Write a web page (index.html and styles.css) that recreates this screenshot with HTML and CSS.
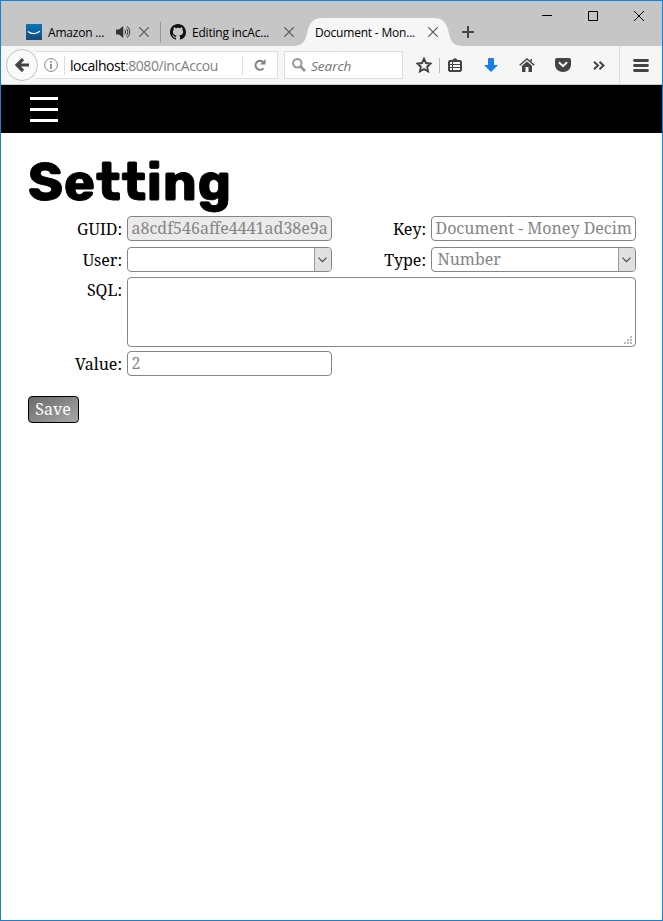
FILE: index.html
```html
<!DOCTYPE html>
<html lang="en">
<head>
<meta charset="utf-8">
<title>Document - Money Decimals</title>
<link rel="stylesheet" href="styles.css">
</head>
<body>
<div class="window">
  <div class="tabstrip">
    <div class="tab tab-amazon">
      <svg class="favicon" width="16" height="16" viewBox="0 0 16 16"><defs><linearGradient id="az" x2="0" y2="1"><stop stop-color="#0876b8"/><stop offset="1" stop-color="#164a78"/></linearGradient></defs><path fill="url(#az)" d="M0 0h16v16H0z"/><path d="M2 7.500c3.500 2.700 8 2.700 12-.2" fill="none" stroke="#fff" stroke-width="1.300"/></svg>
      <span class="tab-title t1">Amazon ...</span>
      <svg class="audio" width="15" height="14" viewBox="0 0 15 14"><path fill="#333" d="M0 4.500h3L7.300 1v12L3 9.500H0z"/><path d="M8.800 5c1 1.200 1 2.800 0 4M10.300 3.300c2 2.200 2 5.200 0 7.400M11 1.300c3.600 2.500 3.600 8.900 0 11.400" fill="none" stroke="#333"/></svg>
      <svg class="close" width="10" height="10" viewBox="0 0 10 10"><path d="M.3.3l9.400 9.400M9.700.3L.3 9.700"/></svg>
    </div>
    <div class="tab tab-github">
      <svg class="favicon" width="16" height="16" viewBox="0 0 16 16"><path fill="#111" d="M8 0C3.580 0 0 3.580 0 8c0 3.540 2.290 6.530 5.470 7.590.4.070.55-.17.55-.38 0-.19-.01-.82-.01-1.490-2.010.37-2.530-.49-2.690-.94-.09-.23-.48-.94-.82-1.130-.28-.15-.68-.52-.01-.53.63-.01 1.080.58 1.230.82.72 1.210 1.870.87 2.330.66.07-.52.28-.87.51-1.070-1.780-.2-3.640-.89-3.640-3.950 0-.87.31-1.590.82-2.150-.08-.2-.36-1.020.08-2.120 0 0 .67-.21 2.200.82.64-.18 1.320-.27 2-.27s1.360.09 2 .27c1.530-1.040 2.200-.82 2.200-.82.44 1.100.16 1.920.08 2.120.51.56.82 1.270.82 2.150 0 3.070-1.870 3.750-3.650 3.950.29.25.54.73.54 1.480 0 1.070-.01 1.930-.01 2.200 0 .21.15.46.55.38A8 8 0 0 0 16 8c0-4.420-3.580-8-8-8z"/></svg>
      <span class="tab-title t2">Editing incAc...</span>
      <svg class="close" width="10" height="10" viewBox="0 0 10 10"><path d="M.3.3l9.400 9.400M9.700.3L.3 9.700"/></svg>
    </div>
    <div class="tab tab-active">
      <svg class="tab-shape" width="166" height="28" viewBox="0 0 166 28"><path fill="#f6f6f6" d="M-5 28C9 28 8 17 10.500 10 13 3 17 0 24 0H136C143 0 147 3 149.500 10 152 17 151 28 165 28z"/></svg>
      <span class="tab-title t3">Document - Mon...</span>
      <svg class="close" width="10" height="10" viewBox="0 0 10 10"><path d="M.3.3l9.400 9.400M9.700.3L.3 9.700"/></svg>
    </div>
    <svg class="newtab" width="12" height="12" viewBox="0 0 12 12"><path d="M6 0v12M0 6h12" stroke="#444" stroke-width="2"/></svg>
    <div class="controls">
      <svg width="10" height="10" viewBox="0 0 10 10"><path d="M0 4.500h10"/></svg>
      <svg width="10" height="10" viewBox="0 0 10 10"><path d="M.5.5h9v9h-9z"/></svg>
      <svg width="10" height="10" viewBox="0 0 10 10"><path d="M0 0l10 10M10 0L0 10"/></svg>
    </div>
  </div>
  <div class="toolbar">
    <div class="back"><svg width="14" height="14" viewBox="0 0 14 14"><path d="M8 1L2 7l6 6M2.500 7H14" fill="none" stroke="#444" stroke-width="3.200"/></svg></div>
    <div class="urlbar">
      <svg class="info" width="14" height="14" viewBox="0 0 14 14"><circle cx="7" cy="7" r="6.400" fill="none" stroke="#858585"/><path d="M6.200 3h1.700v1.700H6.200zM6.200 6h1.700v5H6.200z" fill="#858585"/></svg>
      <span class="url"><b>localhost</b>:8080/incAccou</span>
      <div class="reload"><svg width="12" height="12" viewBox="0 0 12 12"><path d="M9.500 9.300A4.500 4.500 0 1 1 9 2.900" fill="none" stroke="#808080" stroke-width="2"/><path fill="#808080" d="M11.500 0v5.600H6z"/></svg></div>
    </div>
    <div class="search">
      <svg width="14" height="14" viewBox="0 0 14 14"><circle cx="5.300" cy="5.300" r="4.200" fill="none" stroke="#959595" stroke-width="2"/><path d="M8.500 8.500L13 13" stroke="#959595" stroke-width="2.600"/></svg>
      <span>Search</span>
    </div>
    <div class="tools">
      <div class="tool star"><svg width="16" height="16" viewBox="0 0 16 16"><path d="M8 1.700l1.900 4.300 4.700.5-3.500 3.200 1 4.700L8 12l-4.100 2.400 1-4.700L1.400 6.500 6.100 6z" fill="none" stroke="#444" stroke-width="1.900"/></svg></div>
      <div class="tool list"><svg width="14" height="14" viewBox="0 0 14 14"><path fill="#444" d="M1.500 2H4l3-2 3 2h2.500L14 3.500v9L12.500 14h-11L0 12.500v-9z"/><path fill="#f6f6f6" d="M2 4h2v2H2zm3 0h7v2H5zM2 7h2v2H2zm3 0h7v2H5zm-3 3h2v2H2zm3 0h7v2H5z"/></svg></div>
      <div class="tool"><svg width="14" height="14" viewBox="0 0 14 14"><path fill="#177ee8" d="M4 1q0-1 1-1h4q1 0 1 1v6h4l-7 7-7-7h4z"/></svg></div>
      <div class="tool"><svg width="16" height="14" viewBox="0 0 16 14"><path d="M.7 7.300L8 1l7.300 6.300" fill="none" stroke="#444" stroke-width="1.400"/><path fill="#444" d="M11.500 1H13v3l-1.500-1.300zM3 7.800l5-4.300 5 4.300V14H9.500V9h-3v5H3z"/></svg></div>
      <div class="tool"><svg width="16" height="14" viewBox="0 0 16 14"><path fill="#444" d="M2 0h12q2 0 2 2v4.500C16 11 12.500 14 8 14S0 11 0 6.500V2q0-2 2-2z"/><path d="M4.500 4.700L8 8.200l3.500-3.500" fill="none" stroke="#f6f6f6" stroke-width="2" stroke-linecap="round"/></svg></div>
      <div class="tool"><svg width="12" height="9" viewBox="0 0 12 9"><path d="M1 .7l4 3.800-4 3.800M6.500.7l4 3.800-4 3.800" fill="none" stroke="#444" stroke-width="2"/></svg></div>
      <div class="menu"><svg width="16" height="13" viewBox="0 0 16 13"><path d="M1.500 1.500h13M1.500 6.500h13M1.500 11.500h13" stroke="#444" stroke-width="2.800" stroke-linecap="round"/></svg></div>
    </div>
  </div>
  <header class="appbar"><div class="burger"><i></i><i></i><i></i></div></header>
  <main>
    <h1>Setting</h1>
    <form>
      <label>GUID:</label><div class="field readonly"><span>a8cdf546affe4441ad38e9a</span></div>
      <label>Key:</label><div class="field"><span>Document - Money Decim</span></div>
      <label>User:</label><div class="field select"><span></span><div class="arrow"><svg width="9" height="6" viewBox="0 0 9 6"><path d="M.5.7l4 4 4-4" fill="none" stroke="#444" stroke-width="1.100"/></svg></div></div>
      <label>Type:</label><div class="field select"><span>Number</span><div class="arrow"><svg width="9" height="6" viewBox="0 0 9 6"><path d="M.5.7l4 4 4-4" fill="none" stroke="#444" stroke-width="1.100"/></svg></div></div>
      <label>SQL:</label><div class="field area"><svg width="8" height="8" viewBox="0 0 8 8"><path fill="#b8b8b8" d="M6 0h2v2H6zM3 3h2v2H3zm3 0h2v2H6zM0 6h2v2H0zm3 0h2v2H3zm3 0h2v2H6z"/></svg></div>
      <label>Value:</label><div class="field"><span>2</span></div>
    </form>
    <button type="button">Save</button>
  </main>
</div>
</body>
</html>
```

FILE: styles.css
```css
* { box-sizing: border-box; }
body { margin: 0; background: #fff; }
svg { display: block; flex: none; }
.window { height: 921px; border: 1px solid #1a80d4; overflow: hidden; background: #fff; }

.tabstrip { position: relative; display: flex; height: 45px; padding-top: 17px; background: #c6c6c6; font: 12px "Open Sans", "Noto Sans", sans-serif; color: #000; }
.tab { position: relative; display: flex; align-items: center; height: 28px; }
.tab-title { white-space: nowrap; margin-left: 6px; letter-spacing: -0.2px; }
.close { margin-left: auto; fill: none; stroke: #555; stroke-width: 1.2; }
.tab-amazon { width: 134px; margin-left: 25px; padding-right: 11px; }
.tab-amazon::after { content: ""; position: absolute; right: -1px; top: 4px; width: 1px; height: 21px; background: #999; }
.t1 { width: 68px; }
.tab-github { width: 134px; padding-left: 10px; }
.tab-active { width: 166px; margin-left: 4px; padding: 0 26px 0 11px; }
.tab-active > :not(.tab-shape) { position: relative; }
.tab-shape { position: absolute; left: 0; top: 0; overflow: visible; }
.newtab { margin: 8px 0 0 -2px; }
.controls { position: absolute; right: 18px; top: 10px; display: flex; gap: 36px; fill: none; stroke: #000; }

.toolbar { display: flex; align-items: center; height: 39px; background: #f6f6f6; border-bottom: 1px solid #ccc; font-family: "Open Sans", "Noto Sans", sans-serif; }
.back { display: flex; align-items: center; justify-content: center; width: 32px; height: 32px; margin-left: 5px; border: 1px solid #c4c4c4; border-radius: 50%; background: #fafafa; position: relative; }
.urlbar { display: flex; align-items: center; width: 242px; height: 28px; margin-left: -2px; padding-left: 8px; border: 1px solid #ddd; border-left: 0; background: #fff; }
.info { margin-right: 6px; }
.url { display: block; height: 19px; padding-left: 5px; border-left: 1px solid #ddd; font-size: 14px; line-height: 20px; color: #808080; white-space: nowrap; letter-spacing: -0.42px; }
.url b { font-weight: 400; color: #000; }
.reload { display: flex; align-items: center; justify-content: center; width: 35px; height: 19px; margin-left: auto; border-left: 1px solid #ddd; }
.search { display: flex; align-items: center; gap: 5px; width: 119px; height: 28px; margin-left: 6px; padding-left: 7px; border: 1px solid #ddd; background: #fff; font-size: 13.5px; font-style: italic; color: #737373; }
.search span { padding-top: 1px; }
.tools { display: flex; align-items: center; flex: 1; height: 38px; padding-left: 5px; }
.tool { display: flex; flex: none; align-items: center; justify-content: center; width: 36px; height: 15px; }
.star { width: 32px; border-right: 1px solid #bbb; }
.list { width: 33px; padding-right: 3px; }
.menu { display: flex; align-items: center; height: 38px; margin-left: 2px; padding-left: 13px; border-left: 1px solid #ddd; }

.appbar { height: 48px; padding: 12px 0 0 29px; background: #000; }
.burger { display: flex; flex-direction: column; gap: 8px; width: 28px; }
.burger i { height: 3px; background: #fff; }

main { padding: 20px 26px 0 27px; font: 16px/25px "Noto Serif", "Droid Serif", "DejaVu Serif", serif; }
h1 { height: 63px; margin: 0; font: 700 53px/58px Rubik, Inter, sans-serif; letter-spacing: 0.7px; -webkit-text-stroke: 0.9px #000; }
form { display: grid; grid-template-columns: 94px 205px 89px 205px; grid-template-rows: 31px 30px 74px 25px; column-gap: 5px; }
label { line-height: 26px; text-align: right; color: #000; white-space: nowrap; }
.field { display: flex; height: 25px; padding: 0 3.5px; border: 1px solid #858585; border-radius: 4px; background: #fff; color: #858585; line-height: 22px; white-space: nowrap; overflow: hidden; }
.readonly { background: #ebebeb; }
.select { justify-content: space-between; padding: 0 0 0 5.5px; }
.arrow { display: flex; align-items: center; justify-content: center; width: 17px; height: 23px; border-left: 1px solid #999; background: #e0e0e0; }
.arrow svg { margin-right: 1px; }
.area { grid-column: 2 / 5; height: 70px; justify-content: flex-end; align-items: flex-end; padding: 0 3px 2px; }
button { display: block; width: 51px; height: 27px; margin: 20px 0 0; padding: 0 1px 1px 0; border: 1px solid #000; border-radius: 4px; background: linear-gradient(150deg, #696969, #a8a8a8); color: #fff; font: inherit; line-height: 24px; }
```
